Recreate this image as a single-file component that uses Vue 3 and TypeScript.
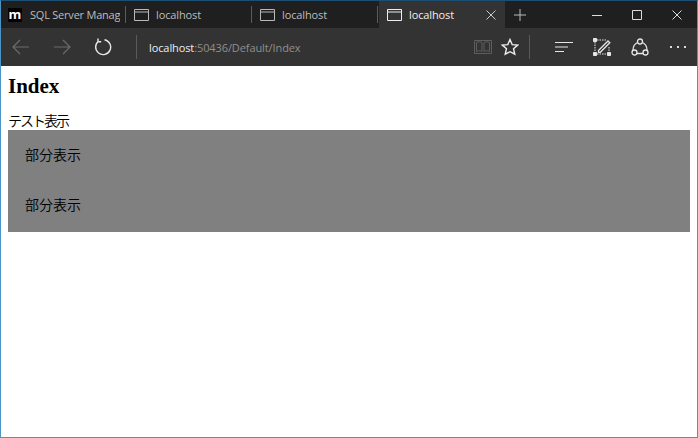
<script setup lang="ts">
const tabs = [
  { label: 'SQL Server Manag', kind: 'logo' },
  { label: 'localhost', kind: 'page' },
  { label: 'localhost', kind: 'page' },
]
</script>

<template>
  <div class="window">
    <div class="tabbar">
      <div v-for="(t, i) in tabs" :key="i" class="tab" :class="{ first: i === 0 }">
        <span v-if="t.kind === 'logo'" class="logo">m</span>
        <svg v-else class="pageicon" width="15" height="12" viewBox="0 0 15 12" fill="none" stroke="#b9b9b9"><path d="M.5.5h14v11H.5zM.5 3h14" /></svg>
        <span class="tablabel">{{ t.label }}</span>
      </div>
      <div class="tab active">
        <svg class="pageicon" width="15" height="12" viewBox="0 0 15 12" fill="none" stroke="#eee"><path d="M.5.5h14v11H.5zM.5 3h14" /></svg>
        <span class="tablabel">localhost</span>
        <svg class="close" width="10" height="10" viewBox="0 0 10 10" stroke="#ccc" fill="none"><path d="M.5.5l9 9M9.5.5l-9 9" /></svg>
      </div>
      <svg class="plus" width="12" height="12" viewBox="0 0 12 12" stroke="#bbb" fill="none"><path d="M6 0v12M0 6h12" /></svg>
      <div class="winctrls">
        <svg width="10" height="10" viewBox="0 0 10 10" stroke="#ddd" fill="none"><path d="M0 5.500h10" /></svg>
        <svg width="10" height="10" viewBox="0 0 10 10" stroke="#ddd" fill="none"><path d="M.5.5h9v9h-9z" /></svg>
        <svg width="10" height="10" viewBox="0 0 10 10" stroke="#ddd" fill="none"><path d="M.5.5l9 9M9.5.5l-9 9" /></svg>
      </div>
    </div>
    <div class="toolbar">
      <div class="navs">
        <svg width="18" height="16" viewBox="0 0 18 16" stroke="#6c6c6c" stroke-width="1.2" fill="none"><path d="M17 8H1M8 1L1 8l7 7" /></svg>
        <svg width="18" height="16" viewBox="0 0 18 16" stroke="#6c6c6c" stroke-width="1.2" fill="none"><path d="M1 8h16M10 1l7 7-7 7" /></svg>
        <svg width="18" height="18" viewBox="0 0 18 18" stroke="#e6e6e6" stroke-width="1.4" fill="none"><path d="M10.500 1.700A7.500 7.500 0 1 1 4.500 3.200M4 .6v3.200h3.200" /></svg>
      </div>
      <span class="sep first"></span>
      <div class="address"><span class="host">localhost</span><span class="rest">:50436/Default/Index</span></div>
      <svg width="18" height="16" viewBox="0 0 18 16" stroke="#5e5e5e" fill="none"><path d="M.5 1.500h17v13H.5zM2.500 3.500c2-1 4-1 5.500 0v9c-1.500-1-3.500-1-5.500 0zM15.500 3.500c-2-1-4-1-5.500 0v9c1.500-1 3.500-1 5.500 0z" /></svg>
      <svg class="star" width="18" height="18" viewBox="0 0 18 18" stroke="#eee" stroke-width="1.4" fill="none"><path d="M9 1.500l2.200 5.100 5.500.5-4.200 3.600 1.300 5.400L9 13.700l-4.800 2.400 1.300-5.400L1.300 7.100l5.500-.5z" /></svg>
      <span class="sep second"></span>
      <svg class="hub" width="18" height="12" viewBox="0 0 18 12" stroke="#e6e6e6" stroke-width="1.2" fill="none"><path d="M0 1.500h18M0 6h13M0 10.500h9" /></svg>
      <svg class="note" width="18" height="18" viewBox="0 0 18 18" stroke="#e6e6e6" fill="none"><path d="M2 4v10M4 16h10M16 9v5M4 2h9" stroke-dasharray="1.500 1" /><path d="M5.500 12.500L15 3l1.800 1.800L7.300 14.300H5.500z" stroke-width="1.300" /><path d="M.5.5h3v3h-3zM.5 14.500h3v3h-3zM14.500 14.500h3v3h-3z" fill="#e6e6e6" /></svg>
      <svg class="share" width="18" height="18" viewBox="0 0 18 18" stroke="#e6e6e6" stroke-width="1.300" fill="none"><path d="M6.500 4.500C3.500 6 2 8.500 2 12M11.500 4.500C14.500 6 16 8.500 16 12M5.500 15.500h7" /><circle cx="9" cy="3.500" r="2.500" /><circle cx="3.500" cy="14.500" r="2.500" /><circle cx="14.500" cy="14.500" r="2.500" /></svg>
      <div class="dots"><i></i><i></i><i></i></div>
    </div>
    <main class="page">
      <h2>Index</h2>
      <div class="line">テスト表示</div>
      <section class="panel">
        <p>部分表示</p>
        <p>部分表示</p>
      </section>
    </main>
  </div>
</template>

<style>
html, body { margin: 0; background: #fff; }
</style>

<style scoped>
.window {
  width: 698px;
  height: 438px;
  box-sizing: border-box;
  border: 1px solid #4a94c8;
  border-top-color: #1c4f73;
  overflow: hidden;
  display: flex;
  flex-direction: column;
  font-family: "Noto Sans CJK JP", "Liberation Serif", serif;
  background: #fff;
}
.tabbar {
  height: 27px;
  flex: none;
  background: #1f1f1f;
  display: flex;
  align-items: center;
  font-family: "Open Sans", "Noto Sans", sans-serif;
  font-size: 11px;
  color: #bdbdbd;
}
.tab {
  width: 126px;
  height: 100%;
  box-sizing: border-box;
  display: flex;
  align-items: center;
  padding-left: 8px;
  position: relative;
  white-space: nowrap;
}
.tab::after {
  content: "";
  position: absolute;
  right: 0;
  top: 5px;
  bottom: 5px;
  width: 1px;
  background: #5b5b5b;
}
.tab.first { width: 125px; padding-left: 7px; }
.tab.active {
  background: #333;
  color: #eee;
  width: 126px;
  margin-left: 1px;
}
.tab.active::after { display: none; }
.logo {
  width: 14px;
  height: 14px;
  background: #000;
  color: #fff;
  font-weight: 700;
  font-size: 13px;
  line-height: 13px;
  text-align: center;
  flex: none;
}
.pageicon { flex: none; }
.tablabel { margin-left: 7px; letter-spacing: -0.12px; }
.tab.first .tablabel {
  margin-left: 8px;
  width: 90px;
  overflow: hidden;
  letter-spacing: -0.22px;
}
.close { position: absolute; right: 9px; top: 9px; }
.plus { margin-left: 9px; }
.winctrls {
  margin-left: auto;
  display: flex;
  align-items: center;
  gap: 30px;
  padding-right: 15px;
}
.toolbar {
  height: 38px;
  flex: none;
  background: #333;
  display: flex;
  align-items: center;
  font-family: "Open Sans", "Noto Sans", sans-serif;
}
.navs {
  display: flex;
  align-items: center;
  gap: 23px;
  padding-left: 11px;
}
.sep {
  width: 1px;
  height: 24px;
  background: #5a5a5a;
  flex: none;
}
.sep.first { margin-left: 24px; }
.address {
  margin-left: 12px;
  flex: 1;
  font-size: 11px;
  letter-spacing: -0.1px;
}
.host { color: #eee; }
.rest { color: #8f8f8f; }
.star { margin-left: 9px; }
.sep.second { margin-left: 10px; }
.hub { margin-left: 25px; }
.note { margin-left: 20px; }
.share { margin-left: 20px; }
.dots {
  display: flex;
  gap: 5px;
  margin-left: 21px;
  margin-right: 11px;
}
.dots i {
  width: 2px;
  height: 2px;
  background: #ddd;
}
.page {
  flex: 1;
  padding: 8px 7px 0;
  color: #000;
}
h2 {
  margin: 0;
  font-family: "Liberation Serif", serif;
  font-size: 21px;
  line-height: 24px;
  font-weight: 700;
}
.line {
  margin-top: 14px;
  padding-bottom: 2px;
  font-size: 14px;
  line-height: 16px;
  font-weight: 350;
  letter-spacing: -2px;
}
.panel {
  background: #808080;
  height: 102px;
  width: 682px;
  padding-left: 17px;
  box-sizing: border-box;
  display: flex;
  flex-direction: column;
  font-size: 14px;
  font-weight: 350;
}
.panel p {
  margin: 0;
  height: 50px;
  line-height: 48px;
}
</style>
